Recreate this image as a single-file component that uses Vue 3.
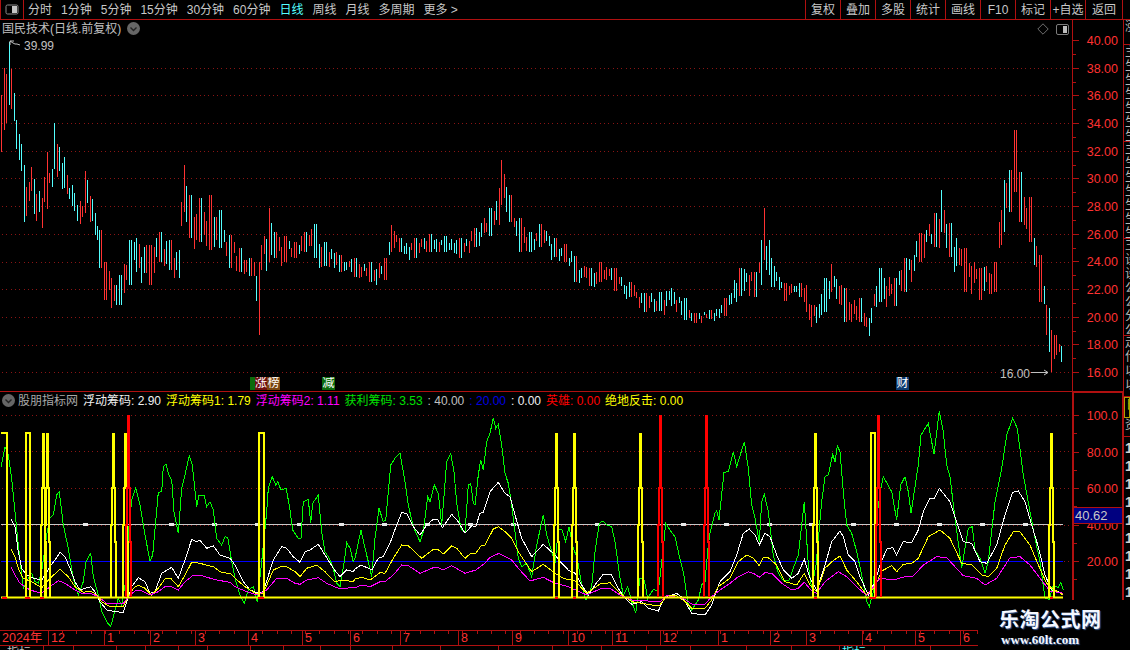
<template>
  <div class="screen">
    <header class="toolbar">
      <button class="panel-btn">
        <svg width="14" height="11" viewBox="0 0 14 11"><rect x="1" y="1" width="12" height="9" rx="1.5" fill="none" stroke="#8c8c8c"/><rect x="7" y="2" width="5" height="7" fill="#c4c4c4"/></svg>
      </button>
      <nav class="periods">
        <span v-for="p in periods" :key="p" :class="{ active: p === '日线' }">{{ p }}</span>
      </nav>
      <div class="actions">
        <span v-for="a in actions" :key="a">{{ a }}</span>
      </div>
    </header>

    <div class="workspace">
      <div class="plots">
        <section class="price-panel">
          <div class="title">
            国民技术(日线.前复权)
            <svg class="chev" width="13" height="13" viewBox="0 0 13 13"><circle cx="6.5" cy="6.5" r="6.5" fill="#666"/><path d="M3.5 5.5 L6.5 8.5 L9.5 5.5" fill="none" stroke="#222" stroke-width="1.4"/></svg>
          </div>
          <div class="corner-icons">
            <svg width="12" height="12" viewBox="0 0 12 12"><path d="M6 .8 L11.2 6 L6 11.2 L.8 6 Z" fill="none" stroke="#6e6e6e"/></svg>
            <svg width="13" height="11" viewBox="0 0 13 11"><rect x=".5" y=".5" width="12" height="10" rx="1.5" fill="none" stroke="#7c7c7c"/><rect x="7" y="2" width="4" height="7" fill="#bdbdbd"/></svg>
          </div>
          <svg class="chart" width="1072" height="371" viewBox="0 20 1072 371">
            <line v-for="y in priceGrid" :key="y" class="dots" x1="2" x2="1072" :y1="y + .5" :y2="y + .5" />
            <path class="candle" stroke="#ff3232" :d="candles.red" />
            <path class="candle" stroke="#54ffff" :d="candles.cyan" />
            <path d="M20 45 L17 44 L15 44 L13 43 L10 41 M10 41 H14 M10 41 V45" fill="none" stroke="#c0c0c0" />
            <text class="note" x="24" y="50">39.99</text>
            <text class="note" x="1000" y="378">16.00</text>
            <path d="M1031 372.5 H1048 M1044 370 L1048 372.5 L1044 375" fill="none" stroke="#c0c0c0" />
          </svg>
          <span class="tag" style="left:250px;width:5px;background:#0b6b0b"></span>
          <span class="tag" style="left:255px;width:12px;background:#6e0f0f">涨</span>
          <span class="tag" style="left:267px;background:#7a4510">榜</span>
          <span class="tag" style="left:322px;background:#0b6b0b">减</span>
          <span class="tag" style="left:896px;background:#0d3a70">财</span>
        </section>

        <section class="signal-panel">
          <div class="legend">
            <svg width="13" height="13" viewBox="0 0 13 13"><circle cx="6.5" cy="6.5" r="6.5" fill="#666"/><path d="M3.5 5.5 L6.5 8.5 L9.5 5.5" fill="none" stroke="#222" stroke-width="1.4"/></svg>
            <span class="grey name">股朋指标网</span>
            <span v-for="l in legend" :key="l.text" :style="{ color: l.color }">{{ l.text }}</span>
          </div>
          <svg class="chart" width="1072" height="238" viewBox="0 392 1072 238">
            <line v-for="y in signalGrid" :key="y" class="dots" x1="2" x2="1072" :y1="y + .5" :y2="y + .5" />
            <line x1="1" x2="1063" y1="561.5" y2="561.5" stroke="#0000ff" />
            <line x1="1" x2="1063" y1="524.5" y2="524.5" stroke="#c8c8c8" />
            <rect v-for="x in markers" :key="x" :x="x - 3" y="523" width="5" height="3" fill="#e8e8e8" />
            <polyline class="curve" stroke="#00ff00" :points="green" />
            <polyline class="curve" stroke="#ffffff" :points="white" />
            <polyline class="curve" stroke="#ffff00" :points="yellow" />
            <polyline class="curve" stroke="#ff00ff" :points="magenta" />
            <line x1="1" x2="1063" y1="597.5" y2="597.5" stroke="#ffff00" stroke-width="2" />
            <path class="pulse" stroke="#ff0000" :d="baseTicks" />
            <path class="pulse" stroke="#ffff00" :d="yellowPulses" />
            <path class="pulse" stroke="#ff0000" :d="redPulses" />
          </svg>
        </section>

        <footer class="dates">
          <div class="ticks">
            <span v-for="m in months" :key="m.x + m.label" class="month" :style="{ left: m.x + 'px' }">{{ m.label }}</span>
            <i v-for="x in minorTicks" :key="x" class="minor" :style="{ left: x + 'px' }"></i>
          </div>
          <div class="under">
            <i v-for="x in underLines" :key="x" :style="{ left: x + 'px' }"></i>
            <span style="left:7px">指标</span>
            <span style="left:50px">.</span>
            <span class="cy" style="left:842px">指标</span>
          </div>
        </footer>
      </div>

      <aside class="axes">
        <svg width="50" height="372" viewBox="1073 20 50 372" class="price-axis">
          <template v-for="t in priceTicks" :key="t.y">
            <line x1="1073" :x2="t.label ? 1079 : 1076" :y1="t.y + .5" :y2="t.y + .5" stroke="#b01010" />
            <text v-if="t.label" x="1118" :y="t.y + 5" text-anchor="end">{{ t.label }}</text>
          </template>
        </svg>
        <div class="signal-axis">
          <svg width="48" height="207" viewBox="1074 393 48 207">
            <template v-for="t in signalTicks" :key="t.y">
              <line x1="1074" :x2="t.label ? 1079 : 1077" :y1="t.y + .5" :y2="t.y + .5" stroke="#b01010" />
              <text v-if="t.label" x="1118" :y="t.y + 5" text-anchor="end">{{ t.label }}</text>
            </template>
          </svg>
          <span class="current">40.62</span>
        </div>
      </aside>

      <aside class="sidelist">
        <div v-for="(g, i) in sideGroups" :key="i" class="side-group" :class="g.cls" :style="{ height: g.h + 'px' }">
          <span v-for="(c, j) in g.chars" :key="j">{{ c }}</span>
        </div>
      </aside>
    </div>

    <div class="watermark">
      <strong>乐淘公式网</strong>
      <em>www.60lt.com</em>
    </div>
  </div>
</template>

<script setup>
const periods = ['分时', '1分钟', '5分钟', '15分钟', '30分钟', '60分钟', '日线', '周线', '月线', '多周期', '更多 >']
const actions = ['复权', '叠加', '多股', '统计', '画线', 'F10', '标记', '+自选', '返回']

const legend = [
  { text: '浮动筹码: 2.90', color: '#f0f0f0' },
  { text: '浮动筹码1: 1.79', color: '#ffff00' },
  { text: '浮动筹码2: 1.11', color: '#ff00ff' },
  { text: '获利筹码: 3.53', color: '#00e000' },
  { text: ': 40.00', color: '#c0c0c0' },
  { text: ': 20.00', color: '#0000e0' },
  { text: ': 0.00', color: '#f0f0f0' },
  { text: '英雄: 0.00', color: '#ff0000' },
  { text: '绝地反击: 0.00', color: '#ffff00' }
]

const priceY = [68, 95, 123, 151, 178, 206, 234, 262, 289, 317, 345, 372]
const priceGrid = priceY
const signalGrid = [415, 451, 488, 525, 561]

const priceLabels = ['40.00', '38.00', '36.00', '34.00', '32.00', '30.00', '28.00', '26.00', '24.00', '22.00', '20.00', '18.00', '16.00']
const priceTicks = []
priceLabels.forEach((label, i) => {
  const y = Math.round(40 + i * 27.67)
  priceTicks.push({ y, label })
  if (i < priceLabels.length - 1) priceTicks.push({ y: Math.round(y + 13.8), label: '' })
})

const signalLabels = ['100.0', '80.00', '60.00', '40.00', '20.00']
const signalTicks = []
signalLabels.forEach((label, i) => {
  const y = Math.round(415 + i * 36.5)
  signalTicks.push({ y, label })
  signalTicks.push({ y: y + 18, label: '' })
})

const markers = [86, 172, 215, 258, 300, 342, 385, 428, 471, 514, 598, 684, 727, 770, 812, 854, 897, 940, 983, 1026]

// first bars read one by one, zoom coordinates [x, top, bottom]
const firstBars = [
  [4, 105, 275, 1], [13, 25, 210, 1], [19, 42, 190, 1], [28, -54, 135, 0], [34, 27, 148, 1], [43, 100, 183, 0],
  [49, 180, 267, 0], [58, 222, 300, 0], [64, 252, 333, 0], [73, 315, 486, 0], [79, 380, 468, 1], [88, 366, 423, 1],
  [94, 320, 393, 1], [103, 357, 462, 0], [109, 402, 483, 1], [118, 393, 456, 0], [127, 414, 504, 1], [133, 350, 426, 1],
  [142, 276, 447, 1], [148, 339, 369, 1], [157, 327, 381, 0], [163, 189, 327, 0], [172, 252, 351, 1], [178, 261, 333, 0],
  [187, 309, 387, 0], [193, 291, 384, 0], [202, 345, 402, 1], [208, 384, 417, 0], [217, 375, 438, 0], [223, 399, 453, 0],
  [232, 435, 483, 0], [241, 423, 492, 1], [247, 438, 471, 1], [256, 333, 459, 1], [262, 360, 429, 0], [271, 408, 486, 1],
  [277, 417, 483, 0], [286, 459, 525, 0], [292, 498, 540, 0]
]

// envelope of the price line further right [x, top, bottom]
const envelope = [
  [100, 230, 268], [105, 262, 300], [112, 278, 308], [120, 275, 305], [130, 240, 285], [136, 238, 272], [150, 245, 285],
  [160, 232, 262], [170, 240, 270], [178, 250, 278], [183, 165, 212], [190, 195, 238], [200, 198, 242], [210, 195, 250],
  [220, 210, 248], [230, 235, 268], [240, 248, 272], [250, 258, 276], [254, 262, 276], [258, 262, 335], [261, 245, 270],
  [268, 208, 262], [275, 232, 258], [285, 236, 262], [295, 242, 258], [305, 232, 252], [315, 224, 258], [325, 242, 266],
  [340, 255, 272], [355, 258, 277], [370, 262, 282], [385, 258, 280], [392, 225, 252], [400, 238, 252], [415, 238, 258],
  [430, 234, 252], [445, 236, 252], [460, 238, 258], [475, 228, 247], [490, 208, 236], [498, 188, 225], [502, 160, 205],
  [510, 195, 222], [520, 218, 252], [530, 232, 252], [540, 224, 247], [555, 238, 257], [565, 244, 262], [575, 256, 282],
  [590, 268, 286], [600, 262, 282], [615, 268, 291], [630, 282, 297], [645, 293, 312], [660, 292, 311], [672, 288, 306],
  [685, 298, 320], [695, 313, 323], [710, 310, 319], [725, 298, 316], [740, 268, 296], [755, 272, 297], [761, 240, 285],
  [764, 208, 260], [768, 240, 275], [772, 258, 287], [785, 283, 301], [800, 283, 297], [806, 285, 312], [812, 305, 327],
  [825, 278, 312], [832, 264, 292], [845, 288, 322], [860, 298, 322], [868, 318, 336], [880, 268, 302], [895, 278, 306],
  [905, 258, 292], [920, 233, 262], [935, 213, 247], [942, 190, 232], [950, 223, 257], [965, 248, 292], [980, 268, 300],
  [995, 262, 292], [1003, 180, 232], [1010, 170, 212], [1015, 130, 192], [1020, 172, 222], [1030, 197, 242], [1040, 255, 302],
  [1048, 308, 352], [1052, 330, 372], [1057, 335, 355], [1062, 346, 362]
]

// the tall wicks that are red in the picture
const redSpikes = [258, 502, 764, 1015, 1052]

let seed = 20240607
const rnd = () => {
  seed = (seed * 16807) % 2147483647
  return seed / 2147483647
}

const buildCandles = () => {
  let red = ''
  let cyan = ''
  firstBars.forEach(([x, top, bottom, up]) => {
    const seg = `M${Math.round(x / 3) + .5} ${60 + top / 3} V${60 + bottom / 3}`
    if (up) red += seg
    else cyan += seg
  })
  for (let i = 39; i < 425; i++) {
    const x = Math.floor(1.5 + 2.5 * i)
    let k = envelope.findIndex((e) => e[0] >= x)
    if (k < 0) break
    if (k === 0) k = 1
    const a = envelope[k - 1]
    const b = envelope[k]
    const f = (x - a[0]) / (b[0] - a[0])
    const top = a[1] + (b[1] - a[1]) * f
    const bottom = a[2] + (b[2] - a[2]) * f
    const h = bottom - top
    let y1 = top + rnd() * h * .5
    let y2 = y1 + h * (.3 + rnd() * .5)
    let spike = false
    if (Math.abs(b[0] - x) < 1.3 || Math.abs(a[0] - x) < 1.3) {
      const e = Math.abs(b[0] - x) < 1.3 ? b : a
      y1 = e[1]
      y2 = e[2]
      spike = redSpikes.includes(e[0])
    }
    const seg = `M${x + .5} ${y1.toFixed(1)} V${y2.toFixed(1)}`
    if (spike || rnd() > .5) red += seg
    else cyan += seg
  }
  return { red, cyan }
}
const candles = buildCandles()

// polyline points as read from the three zoom crops, 3x, origin x = offset, y = 405
const join = (a, b, c) => {
  const out = []
  let last = -1
  ;[[0, a], [355, b], [710, c]].forEach(([off, flat]) => {
    for (let i = 0; i < flat.length; i += 2) {
      const x = off + flat[i] / 3
      if (x <= last) continue
      last = x
      out.push(`${x.toFixed(1)},${(405 + flat[i + 1] / 3).toFixed(1)}`)
    }
  })
  return out.join(' ')
}

const green = join(
  [3,185,15,125,25,150,35,220,45,320,55,420,70,550,85,520,95,505,105,530,115,535,125,500,140,390,150,340,160,330,170,270,178,260,190,360,205,430,220,520,235,570,250,530,258,470,272,445,280,515,295,570,305,620,320,650,332,665,345,615,355,580,365,600,380,510,385,385,395,285,407,248,420,300,435,390,450,468,458,450,475,262,485,260,490,185,498,178,505,205,515,225,522,320,535,385,545,250,555,210,568,152,577,180,590,305,597,270,612,270,620,305,630,290,640,315,650,400,665,420,675,395,683,397,695,470,705,520,720,570,733,595,745,555,760,545,772,590,785,470,800,320,805,250,817,215,827,240,833,230,843,255,858,250,868,300,878,375,895,400,903,400,910,290,925,283,932,355,938,295,955,270,965,380,975,440,988,460,1000,490,1010,535,1020,545,1033,470,1040,412,1050,430,1060,470],
  [0,460,18,375,30,430,40,470,50,515,60,400,72,310,85,350,92,345,107,180,120,160,135,145,150,230,160,300,175,365,195,410,205,380,218,275,225,290,238,240,250,265,260,360,275,170,287,145,297,200,305,295,318,370,330,385,340,240,347,235,355,295,360,300,370,210,377,165,385,195,395,110,405,85,415,38,422,70,430,58,440,120,450,205,460,235,470,300,480,380,490,460,500,485,515,475,530,515,545,420,565,330,575,390,590,440,600,475,610,375,620,372,632,410,642,365,655,430,667,460,680,540,693,585,710,545,720,440,733,355,743,348,755,360,770,365,780,410,795,520,805,570,818,545,830,590,842,625,855,520,868,525,878,580,895,553,910,560,925,430,932,355,945,375,960,395,970,440,985,500,1000,600,1010,615,1030,585,1040,540,1050,530,1060,420],
  [0,383,15,325,20,317,27,345,42,202,55,200,70,140,80,185,103,110,115,190,125,300,135,340,148,410,155,290,163,268,175,320,190,450,205,505,220,527,238,525,250,490,265,450,283,290,295,480,305,550,318,480,335,290,345,215,355,210,368,148,375,170,382,122,390,140,400,260,410,360,425,385,440,440,455,510,470,590,478,605,490,560,500,340,510,265,520,215,545,260,560,345,572,240,585,215,595,260,603,325,625,180,633,90,655,55,672,148,688,18,700,80,710,180,720,215,735,340,755,490,775,370,787,365,795,435,810,460,825,505,835,470,855,290,875,190,890,90,908,40,922,70,940,210,960,320,975,400,990,470,1005,580,1018,583,1030,540,1045,548,1052,533,1060,555]
)

const white = join(
  [33,343,45,365,55,440,65,490,80,510,100,520,125,525,150,485,165,465,180,442,195,455,210,490,225,530,240,555,255,550,272,545,285,560,300,590,320,615,345,620,370,622,380,590,395,545,415,518,435,530,450,565,465,560,485,505,515,487,535,520,555,465,575,403,590,410,600,406,620,430,640,423,660,450,690,460,705,480,730,530,750,555,775,565,790,560,820,465,845,425,860,430,880,455,900,472,915,440,930,435,955,418,975,450,1000,490,1020,515,1040,495,1060,500],
  [0,492,18,480,40,490,50,495,70,460,85,455,105,415,125,360,140,323,155,325,175,365,195,390,215,360,235,343,248,343,262,368,290,328,310,350,330,385,350,362,362,365,375,325,385,322,405,260,430,232,450,265,465,275,480,330,500,400,530,455,565,418,600,450,620,475,640,495,660,505,680,540,700,570,720,540,745,507,770,510,790,550,810,580,830,598,860,590,880,610,910,618,930,575,950,570,965,565,985,580,1010,625,1050,630,1070,600],
  [0,585,15,570,30,530,60,500,80,450,100,385,118,372,135,390,148,420,165,385,180,395,200,450,220,495,245,520,265,505,283,462,300,520,320,555,345,480,365,410,390,378,400,395,415,450,435,470,450,515,475,570,495,530,510,480,530,432,548,428,560,450,580,410,605,413,625,375,640,320,660,280,672,282,688,250,720,290,740,350,760,410,785,415,810,470,830,475,860,420,885,330,908,262,925,258,945,290,965,360,985,425,1005,510,1025,555,1060,565]
)

const yellow = join(
  [33,433,45,455,55,490,70,520,95,530,125,548,150,520,180,493,205,515,225,545,250,562,272,558,290,570,305,590,330,605,370,605,385,575,400,550,415,540,435,550,455,570,475,550,495,522,512,520,535,545,555,510,575,472,600,475,625,482,640,485,665,503,690,505,705,520,735,545,770,567,790,565,820,495,845,484,860,485,885,500,900,515,920,490,950,480,975,500,1005,530,1030,525,1060,530],
  [0,522,20,517,45,525,75,503,90,505,115,460,140,420,160,422,200,460,235,433,248,433,265,447,290,423,305,430,330,460,345,447,362,445,380,420,390,420,415,372,430,365,450,380,470,400,490,440,530,500,565,478,600,505,625,520,660,528,695,565,735,537,765,533,795,565,830,590,890,600,915,600,935,572,960,570,985,585,1010,610,1050,610,1070,585],
  [0,578,25,545,60,520,85,470,110,450,130,460,148,482,160,458,175,458,200,480,225,530,260,540,283,505,300,540,320,560,345,490,365,470,390,453,410,495,440,530,470,570,495,545,515,498,545,482,560,500,580,478,605,475,625,460,655,395,690,375,720,400,755,475,785,480,815,510,835,515,860,490,885,420,910,380,930,380,960,420,985,480,1010,535,1025,550,1060,570]
)

const magenta = join(
  [33,487,45,510,60,535,90,555,125,565,150,545,175,527,195,535,225,555,250,567,272,565,295,575,320,595,370,595,385,575,405,558,425,557,450,570,475,560,495,545,515,545,535,555,555,530,578,512,600,510,625,518,650,525,690,532,705,545,735,558,770,570,800,555,830,520,860,520,885,535,900,538,920,525,955,518,980,535,1020,552,1050,548],
  [0,548,20,540,45,545,75,530,90,530,115,510,140,480,160,482,195,505,235,488,248,487,265,495,290,482,330,505,362,495,390,475,405,457,432,445,470,465,490,490,525,528,565,517,600,535,640,545,695,570,735,552,765,550,795,570,830,585,915,590,935,572,985,580,1010,597,1050,597,1070,575],
  [0,578,30,555,60,535,85,515,115,500,130,505,148,517,165,503,185,505,215,535,245,555,265,550,283,532,305,558,320,565,345,530,385,500,410,515,440,545,470,572,510,520,550,525,585,515,610,513,640,480,680,455,710,458,760,512,800,520,825,540,860,520,900,458,930,455,960,480,990,520,1020,558,1060,565]
)

// spike widening downwards in steps, as the indicator draws it
const spike = (x, top) =>
  `M${x} ${top} V488 H${x - 1} V525 H${x - 2} V597 M${x + 1} ${top} V488 H${x + 2} V542 H${x + 3} V597 `
const frame = (x1, x2) => `M${x1} 597 V433 H${x2} V597 `

const yellowPulses =
  'M1 433 H7 V597 ' +
  frame(26, 30) +
  [43, 47, 113, 125, 556, 574, 640, 815, 1051].map((x) => spike(x, 433)).join('') +
  frame(259, 264) +
  frame(871, 875)
const redPulses = [128, 660, 706, 878].map((x) => spike(x, 415)).join('')
const baseTicks = [[2, 7], [25, 30], [40, 44], [258, 264], [555, 558], [573, 576], [814, 817], [869, 876], [1050, 1053]]
  .map(([a, b]) => `M${a} 597.5 H${b} `).join('')

const months = [
  { x: 2, label: '2024年' }, { x: 50, label: '12' }, { x: 106, label: '1' }, { x: 152, label: '2' }, { x: 197, label: '3' },
  { x: 250, label: '4' }, { x: 304, label: '5' }, { x: 352, label: '6' }, { x: 402, label: '7' }, { x: 460, label: '8' },
  { x: 514, label: '9' }, { x: 570, label: '10' }, { x: 614, label: '11' }, { x: 662, label: '12' }, { x: 720, label: '1' },
  { x: 772, label: '2' }, { x: 808, label: '3' }, { x: 864, label: '4' }, { x: 917, label: '5' }, { x: 962, label: '6' }
]
const minorTicks = []
for (let x = 62; x < 978; x += 14.3) minorTicks.push(Math.round(x))
const underLines = [43, 73, 116, 145, 178, 207, 250, 283, 320, 350, 392, 440, 498, 552, 601, 646, 690, 746, 791, 839, 884, 930]

const sideGroups = [
  { h: 25, chars: ['涨'] },
  { h: 97, chars: ['主', '生', '生', '生', '生', '生', '生'] },
  { h: 97, chars: ['主', '生', '生', '生', '生', '生', '生'] },
  { h: 97, chars: ['王', '设', '设', '公', '公', '分', '公'] },
  { h: 61, chars: ['走', '什', '以', '以'] },
  { h: 21, chars: ['日'], cls: 'hot' },
  { h: 19, chars: ['资'] },
  { h: 163, chars: ['1', '1', '1', '1', '1', '1', '1', '1', '1'], cls: 'rows' }
]
</script>

<style>
html, body {
  margin: 0;
  background: #000;
}
</style>

<style scoped>
.screen {
  position: relative;
  width: 1130px;
  height: 650px;
  overflow: hidden;
  background: #000;
  color: #c8c8c8;
  font: 12px/1 "Liberation Sans", "Noto Sans CJK SC", sans-serif;
}

.toolbar {
  display: flex;
  align-items: stretch;
  height: 19px;
  border-bottom: 1px solid #b01010;
}
.panel-btn {
  display: flex;
  align-items: center;
  justify-content: center;
  width: 24px;
  padding: 0;
  background: none;
  border: solid #b01010;
  border-width: 0 1px;
}
.periods {
  display: flex;
  align-items: center;
  gap: 9px;
  padding-left: 4px;
  white-space: nowrap;
}
.periods .active {
  color: #54ffff;
}
.actions {
  display: flex;
  margin-left: auto;
  margin-right: 7px;
  border-left: 1px solid #b01010;
  border-right: 1px solid #b01010;
}
.actions span {
  display: flex;
  align-items: center;
  justify-content: center;
  width: 34px;
  white-space: nowrap;
  border-left: 1px solid #b01010;
}
.actions span:first-child {
  border-left: 0;
}
.actions span:last-child {
  width: 36px;
}

.workspace {
  display: flex;
  height: 630px;
}
.plots {
  width: 1072px;
  flex: none;
}
.price-panel {
  position: relative;
  height: 371px;
  border-bottom: 1px solid #b01010;
}
.signal-panel {
  position: relative;
  height: 238px;
}
.chart {
  display: block;
}
.title {
  position: absolute;
  top: 2px;
  left: 2px;
  display: flex;
  align-items: center;
  gap: 6px;
  color: #c0c0c0;
  white-space: nowrap;
}
.corner-icons {
  position: absolute;
  top: 3px;
  right: 3px;
  display: flex;
  align-items: center;
  gap: 7px;
}
.tag {
  position: absolute;
  top: 357px;
  width: 13px;
  height: 13px;
  color: #fff;
  text-align: center;
  line-height: 13px;
  overflow: hidden;
}
.dots {
  stroke: #8b1414;
  stroke-dasharray: 1 3.3;
  shape-rendering: crispEdges;
}
.candle {
  fill: none;
  shape-rendering: crispEdges;
}
.curve {
  fill: none;
  shape-rendering: crispEdges;
}
.pulse {
  fill: none;
  stroke-width: 2;
  shape-rendering: crispEdges;
}
.note {
  fill: #c0c0c0;
  font-size: 12px;
}

.legend {
  position: absolute;
  z-index: 1;
  top: 2px;
  left: 2px;
  display: flex;
  align-items: center;
  gap: 5px;
  white-space: nowrap;
}
.legend svg {
  margin-right: -2px;
}
.grey {
  color: #a8a8a8;
}

.dates {
  position: relative;
  height: 20px;
}
.ticks {
  position: relative;
  width: 978px;
  height: 16px;
  border-top: 1px solid #b01010;
  border-bottom: 1px solid #b01010;
  box-sizing: border-box;
}
.month {
  position: absolute;
  top: 0;
  height: 14px;
  padding-left: 2px;
  margin-left: -2px;
  border-left: 1px solid #b01010;
  color: #ff3232;
  line-height: 15px;
  font-size: 12.5px;
  white-space: nowrap;
}
.month:first-child {
  border-left: 0;
}
.minor {
  position: absolute;
  top: 0;
  width: 1px;
  height: 3px;
  background: #b01010;
}
.under {
  position: relative;
  height: 4px;
  overflow: hidden;
}
.under i {
  position: absolute;
  top: 0;
  width: 1px;
  height: 4px;
  background: #b01010;
}
.under span {
  position: absolute;
  top: 1px;
  color: #c0c0c0;
}
.under .cy {
  color: #54ffff;
}

.axes {
  width: 51px;
  flex: none;
}
.price-axis, .signal-axis svg {
  display: block;
}
.price-axis {
  border-left: 1px solid #b01010;
}
.price-axis text, .signal-axis text {
  fill: #ff3232;
  font-size: 12.5px;
}
.signal-axis {
  position: relative;
  box-sizing: border-box;
  height: 209px;
  border: 2px solid #b01010;
  border-bottom: 0;
  border-right-width: 1px;
  margin-top: -1px;
}
.current {
  position: absolute;
  top: 114px;
  left: -1px;
  box-sizing: border-box;
  width: 50px;
  height: 17px;
  padding-left: 1px;
  background: #000080;
  border: 1px solid #b01010;
  color: #c8c8c8;
  font-size: 13px;
  line-height: 15px;
}

.sidelist {
  flex: 1;
  overflow: hidden;
  border-left: 1px solid #b01010;
  box-sizing: border-box;
  height: 580px;
  color: #b8b8b8;
  line-height: 14px;
}
.side-group {
  display: flex;
  flex-direction: column;
  overflow: hidden;
  box-sizing: border-box;
  padding-left: 1px;
  border-bottom: 1px solid #b01010;
}
.side-group.hot {
  color: #c8c800;
  border: 1px solid #b0a000;
}
.side-group.rows {
  border-bottom: 0;
  gap: 4px;
  padding-top: 4px;
  font-weight: 700;
  font-size: 14px;
  color: #d0d0d0;
}

.watermark {
  position: absolute;
  top: 610px;
  left: 999px;
  display: flex;
  flex-direction: column;
  align-items: flex-start;
}
.watermark strong {
  color: #f4f8ff;
  font-size: 20px;
  line-height: 20px;
  letter-spacing: .5px;
  white-space: nowrap;
  text-shadow: 1px 1px 1px #3a5a90;
}
.watermark em {
  margin: 3px 0 0 2px;
  color: #f4f8ff;
  font: 700 13px/14px "Liberation Serif", serif;
  white-space: nowrap;
  text-shadow: 1px 1px 1px #3a5a90;
}
</style>
